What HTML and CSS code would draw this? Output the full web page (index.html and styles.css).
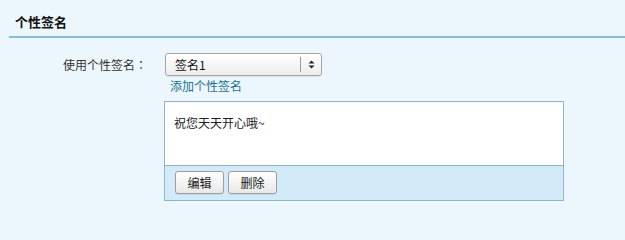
FILE: index.html
```html
<!DOCTYPE html>
<html lang="zh-CN">
<head>
<meta charset="utf-8">
<title>个性签名</title>
<link rel="stylesheet" href="styles.css">
</head>
<body>
<div class="page">
  <div class="section-head"><h2 class="section-title">个性签名</h2></div>
  <div class="form-row">
    <div class="form-label">使用个性签名<span class="colon" lang="zh-TW">：</span></div>
    <div class="form-field">
      <div class="select">
        <span class="select-value">签名1</span>
        <span class="select-sep"></span>
        <span class="select-arrows">
          <svg width="7" height="9" viewBox="0 0 7 9"><path d="M3.5 0.5L6.5 3.5H0.5Z" fill="#222"/><path d="M3.5 8.5L6.5 5.5H0.5Z" fill="#222"/></svg>
        </span>
      </div>
      <a class="add-link" href="#">添加个性签名</a>
      <div class="sig-box">
        <div class="sig-text">祝您天天开心哦~</div>
        <div class="sig-actions">
          <button class="btn" type="button">编辑</button>
          <button class="btn" type="button">删除</button>
        </div>
      </div>
    </div>
  </div>
</div>
</body>
</html>
```
FILE: styles.css
```css
html, body {
  margin: 0;
  padding: 0;
  background: #ebf7fc;
}
body {
  font-family: "Noto Sans CJK SC", "Liberation Sans", sans-serif;
  font-size: 12px;
  color: #222;
}
.page {
  width: 625px;
  height: 221px;
}
.section-head {
  margin-left: 9px;
  height: 36px;
  border-bottom: 2px solid #84bedb;
  box-sizing: content-box;
}
.section-title {
  margin: 0;
  padding: 14px 0 0 6px;
  font-size: 13px;
  line-height: 16px;
  font-weight: bold;
  color: #111;
}
.form-row {
  display: flex;
  margin-top: 15px;
}
.form-label {
  width: 147px;
  text-align: right;
  line-height: 23px;
  color: #333;
  margin-right: 17px;
  flex: none;
}
.colon {
  font-family: "Noto Sans CJK TC", "Noto Sans CJK SC", sans-serif;
}
.form-field {
  display: flex;
  flex-direction: column;
  align-items: flex-start;
}
.select {
  margin-left: 1px;
  width: 157px;
  height: 23px;
  box-sizing: border-box;
  border: 1px solid #a6a6a6;
  border-radius: 3px;
  background: linear-gradient(#ffffff, #ededed);
  display: flex;
  align-items: center;
  box-shadow: 0 1px 1px rgba(0,0,0,0.08);
}
.select-value {
  flex: 1;
  padding-left: 9px;
  line-height: 21px;
  color: #111;
}
.select-sep {
  width: 1px;
  height: 15px;
  background: #9a9a9a;
}
.select-arrows {
  width: 20px;
  display: flex;
  justify-content: center;
  align-items: center;
}
.add-link {
  margin-left: 6px;
  margin-top: 2px;
  line-height: 16px;
  color: #1d6f8f;
  text-decoration: none;
}
.sig-box {
  margin-top: 7px;
  width: 400px;
  box-sizing: border-box;
  border: 1px solid #8fb5c2;
  background: #fff;
}
.sig-text {
  height: 64px;
  box-sizing: border-box;
  padding: 12px 0 0 9px;
  line-height: 18px;
  color: #222;
  border-bottom: 1px solid #8fb5c2;
}
.sig-actions {
  background: #d3ebf8;
  height: 34px;
  box-sizing: border-box;
  padding: 5px 0 0 10px;
  display: flex;
  gap: 4px;
}
.btn {
  width: 49px;
  height: 23px;
  padding: 0;
  border: 1px solid #9e9e9e;
  border-radius: 3px;
  background: linear-gradient(#ffffff, #e8e8e8);
  font-family: inherit;
  font-size: 12px;
  color: #222;
  line-height: 21px;
  box-shadow: 0 1px 1px rgba(0,0,0,0.08);
}
```
